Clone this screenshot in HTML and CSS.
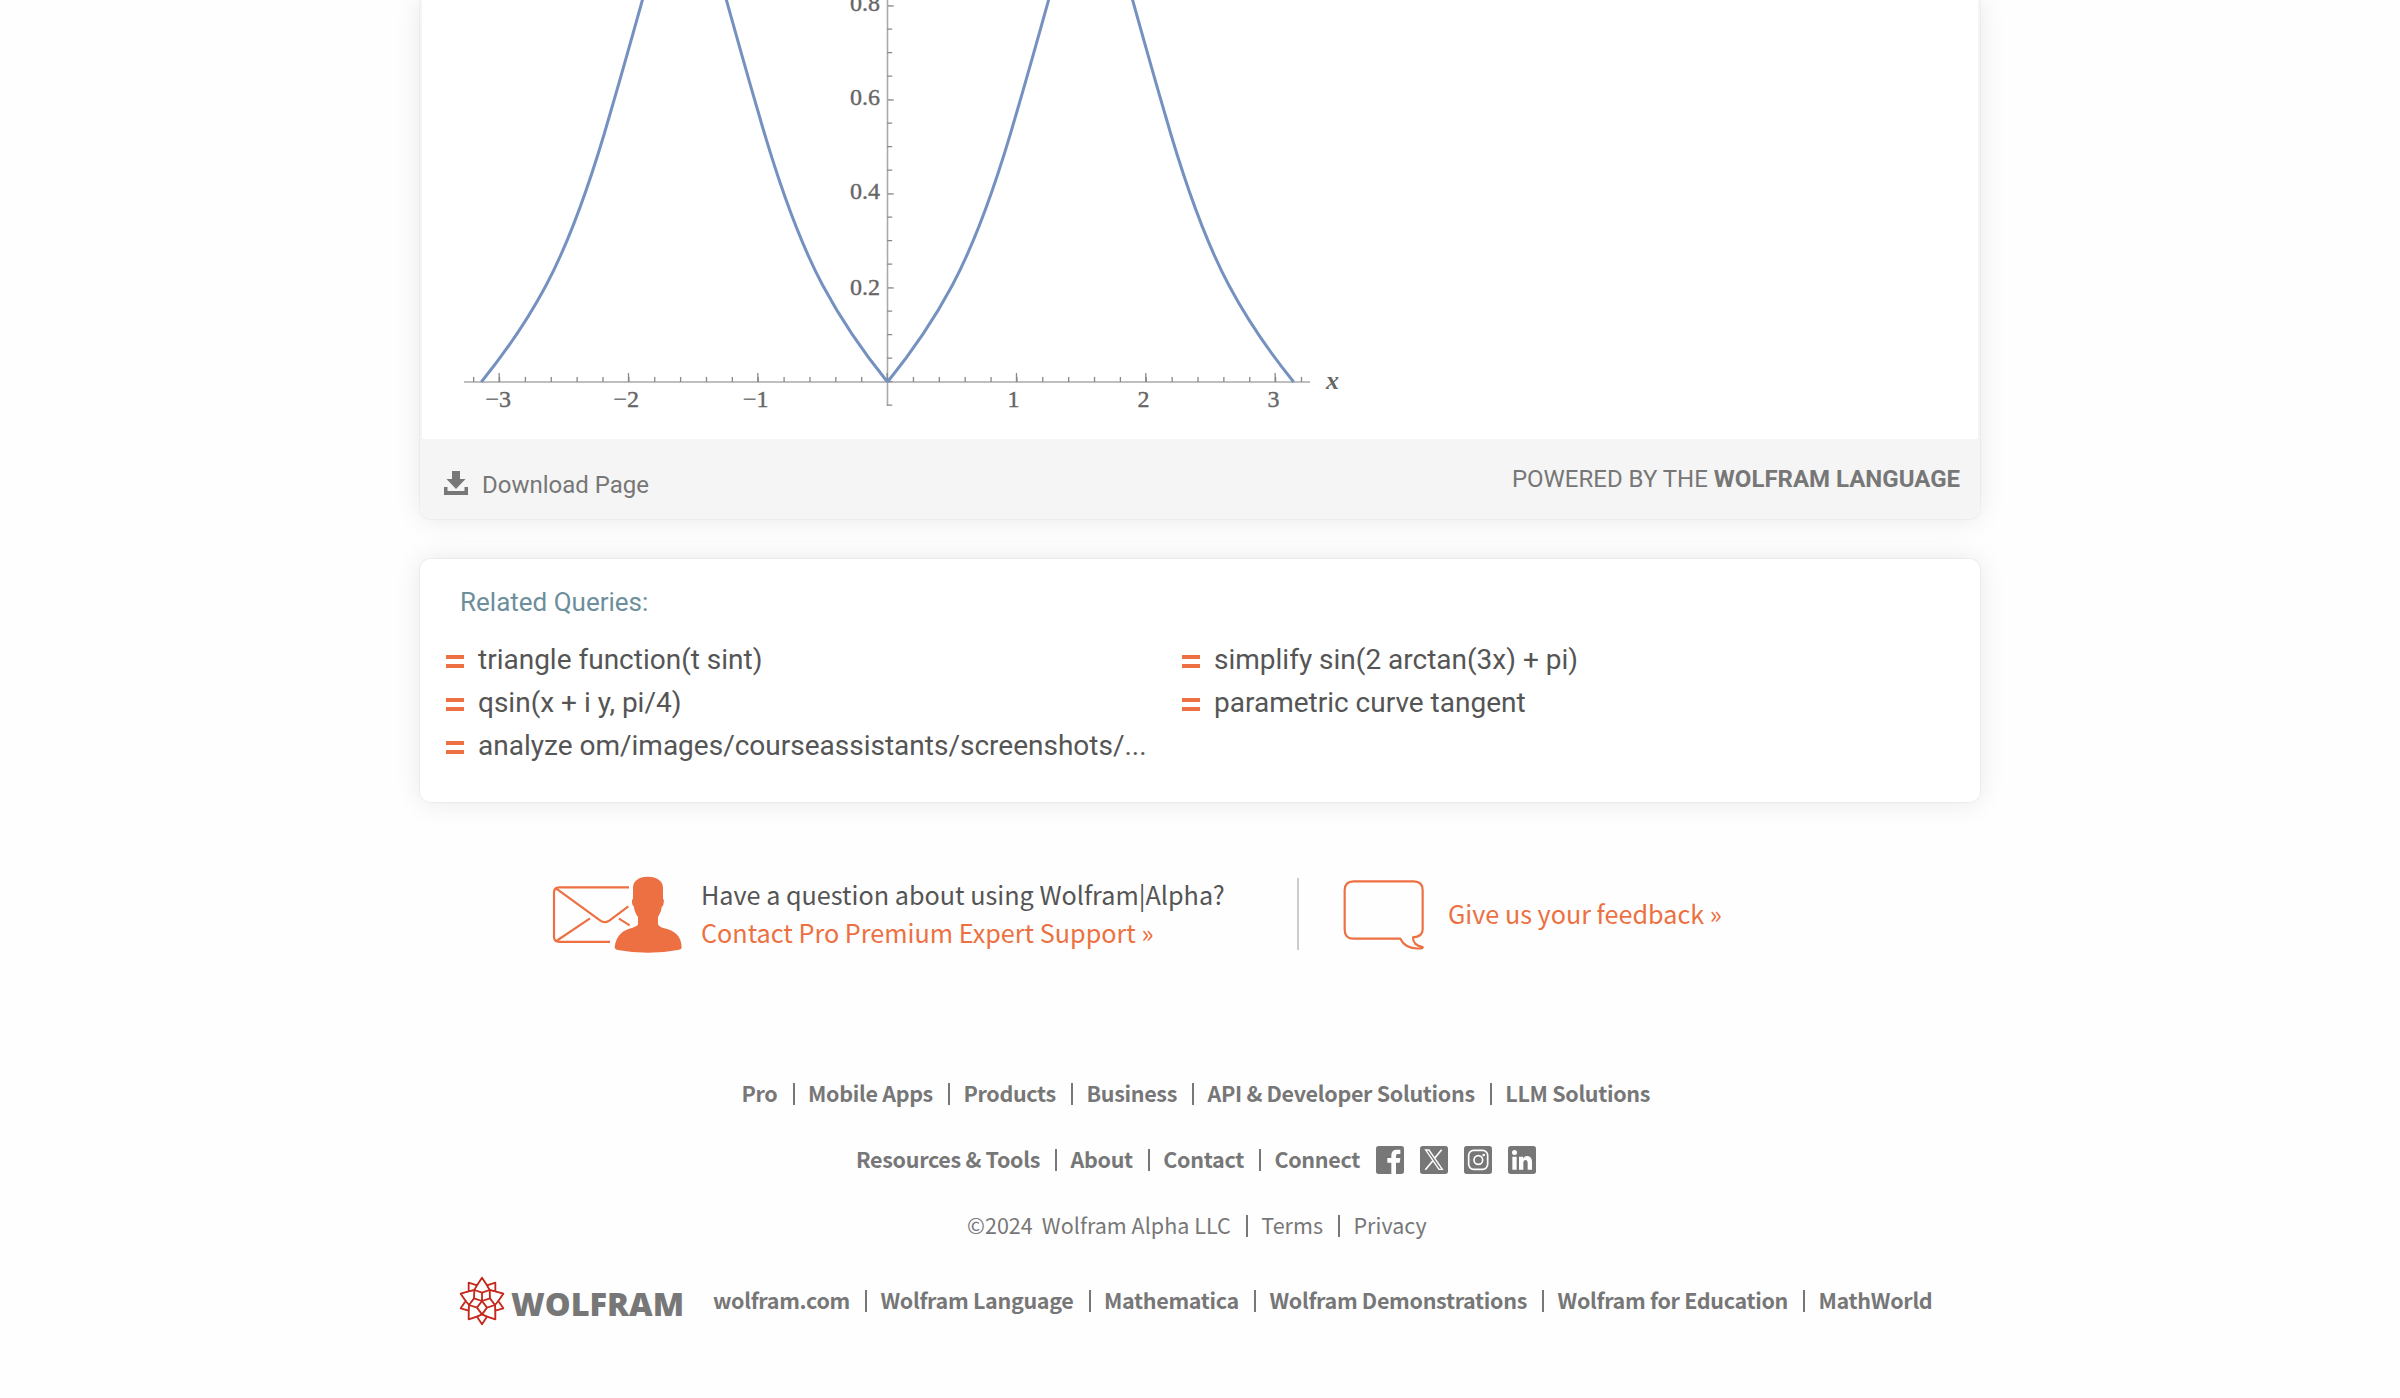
FILE: index.html
```html
<!DOCTYPE html>
<html lang="en">
<head>
<meta charset="utf-8">
<title>Wolfram|Alpha</title>
<link rel="stylesheet" href="styles.css">
</head>
<body>
<main class="page">
  <section class="card result">
    <div class="plot">
      <svg width="1556" height="439" viewBox="422 0 1556 439">
        <defs>
          <path id="rise" d="M887.5 382C909 355.500 930.6 326 952.2 285.500C973.8 245 995.2 188 1016.8 112C1027.4 76 1038 38 1050 -5"/>
        </defs>
        <g class="axis">
          <path d="M464 382H1310M887.5 0V406"/>
          <path class="ticks" d="M473 379.5H1303" stroke-width="5" stroke-dasharray="1.3 24.57"/>
          <path class="ticks" d="M498.5 377.5H1280" stroke-width="9" stroke-dasharray="1.3 128.03"/>
          <path class="ticks" d="M889.7 405.8V0" stroke-width="5" stroke-dasharray="1.3 22.2"/>
          <path d="M887 288H894M887 194H894M887 100H894M887 6H894"/>
        </g>
        <g class="curve">
          <use href="#rise"/>
          <use href="#rise" transform="matrix(-1 0 0 1 2181.2 0)"/>
          <use href="#rise" transform="translate(-406.2 0)"/>
          <use href="#rise" transform="matrix(-1 0 0 1 1775 0)"/>
        </g>
        <g class="labels" text-anchor="end">
          <text x="880" y="10.5">0.8</text>
          <text x="880" y="104.5">0.6</text>
          <text x="880" y="198.5">0.4</text>
          <text x="880" y="294.5">0.2</text>
          <text x="511" y="406.5">−3</text>
          <text x="639" y="406.5">−2</text>
          <text x="768.5" y="406.5">−1</text>
          <text x="1019.5" y="406.5">1</text>
          <text x="1149.5" y="406.5">2</text>
          <text x="1279.5" y="406.5">3</text>
          <text class="var" x="1339" y="388.5">x</text>
        </g>
      </svg>
    </div>
    <footer class="bar">
      <a class="download">
        <svg width="24" height="24" viewBox="0 0 24 24"><path d="M8 0H16V8H21.5L12 18L2.5 8H8ZM0 16H3.500V20H20.500V16H24V24H0Z"/></svg>
        <span>Download Page</span>
      </a>
      <span class="powered">POWERED BY THE <b>WOLFRAM LANGUAGE</b></span>
    </footer>
  </section>

  <section class="card related">
    <h2>Related Queries:</h2>
    <ul>
      <li>triangle function(t sint)</li>
      <li>simplify sin(2 arctan(3x) + pi)</li>
      <li>qsin(x + i y, pi/4)</li>
      <li>parametric curve tangent</li>
      <li>analyze om/images/courseassistants/screenshots/...</li>
    </ul>
  </section>

  <section class="support">
    <svg class="expert" width="130" height="77" viewBox="36 77 390 231">
      <g fill="none" stroke="#ed7042" stroke-width="6.500">
        <path d="M267 111H58Q42 111 42 127V259Q42 274.500 58 274.500H210"/>
        <path d="M48 114L180 210Q193 220 206 212L265 168"/>
        <path d="M150 204L49 272M237 205L269 225"/>
      </g>
      <path fill="#ed7042" d="M323 79C352 79 369 93 369 112V146Q373 146 371 157Q370 168 366 168Q363 188 354 200V222Q356 229 370 233C402 240 424 255 425 291Q425 297 414 299Q325 316 233 299Q224 297 224 291C228 254 250 238 278 232Q292 228 294 222V200Q284 188 281 168Q277 167 276 157Q275 146 279 146V112C279 93 295 79 323 79Z"/>
    </svg>
    <div class="question">
      <p>Have a question about using Wolfram|Alpha?</p>
      <a>Contact Pro Premium Expert Support »</a>
    </div>
    <i class="divider"></i>
    <svg class="bubble" width="82" height="72" viewBox="218 87 246 216">
      <path fill="none" stroke="#ed7042" stroke-width="6.500" stroke-linejoin="round" d="M250 94H430Q457 94 457 121V238Q457 261 428 262Q428 287 457 291Q458 295 452 295Q406 299 390 266H250Q223 266 223 239V121Q223 94 250 94Z"/>
    </svg>
    <a class="feedback">Give us your feedback »</a>
  </section>

  <nav class="foot">
    <div class="row first">
      <a>Pro</a><a>Mobile Apps</a><a>Products</a><a>Business</a><a>API &amp; Developer Solutions</a><a>LLM Solutions</a>
    </div>
    <div class="row second">
      <a>Resources &amp; Tools</a><a>About</a><a>Contact</a><a>Connect</a>
      <div class="social">
        <svg width="28" height="28" viewBox="0 0 84 84"><rect width="84" height="84" rx="8"/><path fill="#fff" d="M46 84V50H34V36H46V28Q46 11 62 11H73V24H65Q60 24 60 30V36H73L71 50H60V84Z"/></svg>
        <svg width="28" height="28" viewBox="0 0 84 84"><rect width="84" height="84" rx="8"/><g fill="none" stroke="#fff" stroke-width="4"><path d="M17 12H27L67 70H57Z"/><path d="M65 11L45 35M38 45L16 71" stroke-width="5"/></g></svg>
        <svg width="28" height="28" viewBox="0 0 84 84"><rect width="84" height="84" rx="8"/><g fill="none" stroke="#fff" stroke-width="5"><rect x="14" y="13" width="57" height="57" rx="15"/><circle cx="43" cy="42" r="13"/></g><circle cx="59" cy="27" r="4" fill="#fff"/></svg>
        <svg width="28" height="28" viewBox="0 0 84 84"><rect width="84" height="84" rx="8"/><path fill="#fff" d="M13 32H26V71H13ZM33 32H45V37Q50 30 58 30Q72 31 72 48V71H59V50Q59 42 53 42Q46 42 46 51V71H33Z"/><circle cx="19.500" cy="19.500" r="7.500" fill="#fff"/></svg>
      </div>
    </div>
    <div class="row third">
      <span class="year">©2024</span><a>Wolfram Alpha LLC</a><a>Terms</a><a>Privacy</a>
    </div>
    <div class="row last">
      <div class="logo">
        <svg width="46" height="50" viewBox="-69 -75 138 150">
          <g fill="none" stroke="#c5281c" stroke-width="5.500" stroke-linejoin="round">
            <path d="M0 -70L15 -47L40 -55L40 -29L64 -22L49 0L64 22L40 29L40 55L15 47L0 70L-15 47L-40 55L-40 29L-64 22L-49 0L-64 -22L-40 -29L-40 -55L-15 -47Z"/>
            <path d="M0 -25L23 -33L24 -8L39 12L15 20L0 40L-15 20L-39 12L-24 -8L-23 -33Z"/>
            <path d="M0 0V-25M0 0L24 -8M0 0L15 20M0 0L-15 20M0 0L-24 -8"/>
            <path d="M15 -47L23 -33L40 -29M49 0L39 12L40 29M15 47L0 40L-15 47M-40 29L-39 12L-49 0M-40 -29L-23 -33L-15 -47"/>
            <path d="M0 -70L-23 -33M0 -70L23 -33M64 -22L23 -33M64 -22L39 12M40 55L39 12M40 55L0 40M-40 55L0 40M-40 55L-39 12M-64 -22L-39 12M-64 -22L-23 -33" stroke-width="2"/>
          </g>
        </svg>
        <strong>WOLFRAM</strong>
      </div>
      <a>wolfram.com</a><a>Wolfram Language</a><a>Mathematica</a><a>Wolfram Demonstrations</a><a>Wolfram for Education</a><a>MathWorld</a>
    </div>
  </nav>
</main>
</body>
</html>
```
FILE: styles.css
```css
*, *::before { box-sizing: border-box; }
body { margin: 0; background: #fefefe; font-family: Roboto, sans-serif; color: #555; overflow: hidden; }
.page { width: 1560px; margin: 0 auto; }
svg { display: block; flex: none; }

.card { background: #fff; border-radius: 10px; box-shadow: 0 0 2px rgba(0,0,0,.12), 0 0 28px rgba(0,0,0,.09); }
.result { border-radius: 0 0 10px 10px; }
.plot { height: 439px; border: 2px solid #f5f5f5; border-width: 0 2px; }
.axis { fill: none; stroke: #aaa; stroke-width: 1.6; }
.ticks { stroke: #888; }
.curve { fill: none; stroke: #7591c0; stroke-width: 3; }
.labels { font: 24px "Liberation Serif", serif; fill: #666; stroke: #666; stroke-width: .4px; }
.labels .var { font: italic bold 26px "Liberation Serif", serif; stroke: none; }

.bar { height: 80px; background: #f5f5f5; border-radius: 0 0 10px 10px; display: flex; justify-content: space-between; align-items: center; padding: 0 20px 0 24px; color: #777; font-size: 24px; }
.download { display: flex; align-items: center; gap: 14px; padding-top: 11px; fill: #777; }
.download svg { margin-top: -4px; }

.related { margin-top: 40px; height: 243px; padding: 28px 24px 0 26px; }
.related h2 { margin: 0 0 21px 14px; font-size: 26px; line-height: 30px; font-weight: 400; color: #6d8e9c; }
.related ul { margin: 0; padding: 0; list-style: none; display: grid; grid-template-columns: 736px 1fr; }
.related li { display: flex; align-items: center; gap: 14px; line-height: 43px; font-size: 28px; white-space: nowrap; }
.related li::before { content: ""; width: 18px; height: 13px; margin-top: 3px; border: solid #ed7042; border-width: 4.500px 0; }

.support { height: 76px; margin-top: 73px; padding-left: 132px; display: flex; align-items: center; font: 25.2px/38px "Noto Sans CJK SC", sans-serif; white-space: nowrap; }
.support p { margin: 0; }
.support a { color: #ed7042; }
.expert { margin-top: 2px; }
.question { width: 615px; padding-left: 19px; }
.question a { display: block; }
.divider { width: 2px; height: 72px; margin-top: 2px; background: #ccc; }
.bubble { margin: 3px 0 0 44px; }
.feedback { margin-left: 23px; }

.foot { margin-top: 110px; color: #777; font: bold 21.5px/30px "Noto Sans CJK SC", sans-serif; letter-spacing: -.31px; white-space: nowrap; }
.row { height: 66px; display: flex; align-items: center; }
.row a { display: flex; align-items: center; height: 30px; padding-bottom: 2px; }
.row a + a::before { content: ""; width: 2px; height: 22px; margin: 2px 13.5px 0 15px; background: #777; }
.first { padding-left: 321.5px; }
.second { padding-left: 436px; }
.third { padding-left: 547px; font-weight: 400; letter-spacing: .03px; }
.year { margin-right: 9px; padding-bottom: 2px; }
.social { display: flex; gap: 16px; margin-left: 16.5px; fill: #777; }
.last { height: 84px; padding-left: 39px; }
.logo { display: flex; align-items: center; width: 254px; }
.logo strong { margin: 5px 0 0 6px; font: 800 32.5px/40px "Open Sans", sans-serif; letter-spacing: 0; }
```
